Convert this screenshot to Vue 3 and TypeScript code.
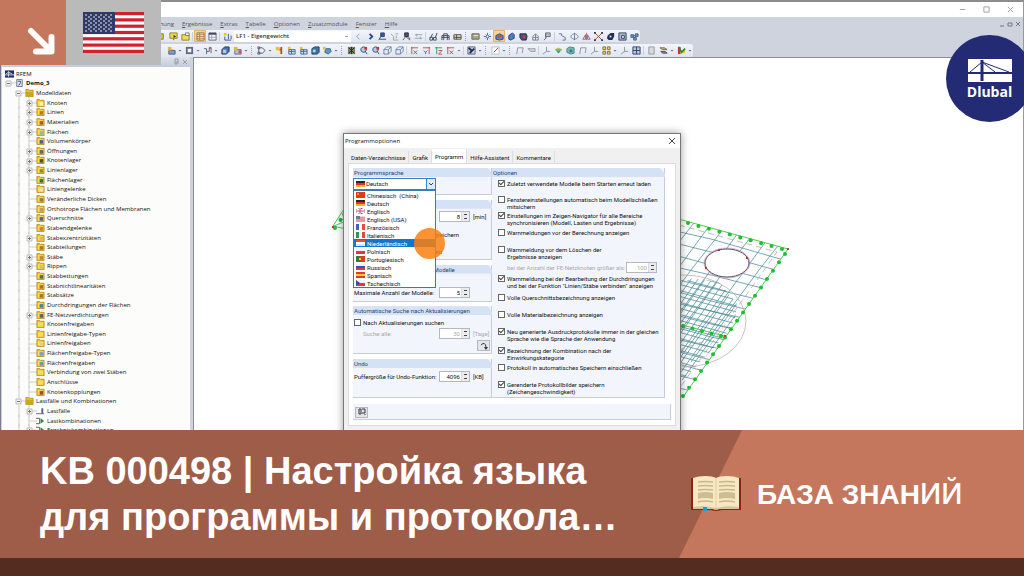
<script setup lang="ts">
import { ref } from 'vue'

interface Shape { d: string; f?: string; s?: string; w?: number }
interface TreeRow { label: string; level: number; box?: '+' | '-'; icon: string; tint?: string; bold?: boolean }
interface Option { label: string; on: boolean; gap: string; sub?: boolean }
interface Language { name: string; flag: Shape[] }

const menus = ['Berechnung', 'Ergebnisse', 'Extras', 'Tabelle', 'Optionen', 'Zusatzmodule', 'Fenster', 'Hilfe']

const glyphs: Record<string, Shape[]> = {
  bulb: [{ d: 'M1 2h6v6H1z', f: '#d8c23a', s: '#8a7a20' }],
  note: [{ d: 'M1 1h8v6H6L5 9V7H1z', f: '#f0d84a', s: '#8b7d28' }, { d: 'M5 3l3 2-3 2z', f: '#444' }],
  folder: [{ d: 'M1 3h8v6H1z', f: '#f2dc5c', s: '#8b7d28' }, { d: 'M5 1h4v3H5z', f: '#fff', s: '#777' }],
  panel: [{ d: 'M1 1h8v8H1z', f: '#fff0c8', s: '#8a6a48' }, { d: 'M4 1v8M1 3h8M1 5h8M1 7h8', s: '#b08048' }],
  table: [{ d: 'M1 1h8v8H1z', f: '#eef0f4', s: '#667' }, { d: 'M1 2h8', s: '#446', w: 2 }, { d: 'M4 3v6M1 6h8', s: '#aab' }],
  load: [{ d: 'M1 1h3v3H1z', f: '#e8c72f' }, { d: 'M2 5v4h7M6 2v6M9 4v4', s: '#35558f' }],
  prev: [{ d: 'M6 2L3 5l3 3', s: '#7d94c4' }],
  next: [{ d: 'M4 2l3 3-3 3', s: '#2448a0', w: 2 }],
  point: [{ d: 'M3 1h4v4H3zM3 5L1 9', f: '#3a5a98', s: '#27406f' }, { d: 'M2 8h7', s: '#444' }],
  dims: [{ d: 'M1 2l3 3v4h5M6 2h3M7 4v3', s: '#9aa0ab' }],
  magnet: [{ d: 'M3 1h4v4H3z', f: '#35589c', s: '#223' }, { d: 'M1 9l3-4 5 4', s: '#554' }, { d: 'M7 5l2 3', s: '#b33' }],
  measure: [{ d: 'M1 3h8M1 7h8M3 2v3M7 5v3', s: '#9a9fae' }],
  glasses: [{ d: 'M1 6h3v3H1zM5 6h3v3H5zM2 6l2-4M7 6l2-5', s: '#345' }],
  bridge: [{ d: 'M1 9V4h8v5M1 6h8M3 4v5M7 4v5M3 4V2h4v2', s: '#3c4656' }],
  rail: [{ d: 'M1 3h8v5H1zM1 6h8M4 3v5', f: '#e6d8a8', s: '#4c4c50' }],
  sheet: [{ d: 'M1 2h8v6H1z', f: '#a5a58a', s: '#66665a' }, { d: 'M3 4h5', s: '#eee' }],
  move: [{ d: 'M5 1v8M1 5h8M3 3l4 4M7 3L3 7', s: '#4a5ca4' }, { d: 'M4 4h2v2H4z', f: '#fff' }],
  cube: [{ d: 'M1 4l4-2 4 2v4l-4 1-4-1z', f: '#5e86c4', s: '#2d4672' }, { d: 'M3 6l4-2', s: '#d04a30', w: 2 }],
  cubeb: [{ d: 'M2 4l4-3 2 2v4L4 9 2 8z', f: '#4b7dc0', s: '#27406f' }, { d: 'M5 4v4', s: '#e3543a' }],
  cubec: [{ d: 'M1 2h7l1 3-1 4H3L1 6z', f: '#3b5288', s: '#2a2c46' }, { d: 'M4 4h3v3H4z', f: '#d63b30' }],
  house: [{ d: 'M2 9V5l3-3 3 3v4zM2 6h6M5 2v7', s: '#7b8089' }],
  flagp: [{ d: 'M3 1h5v4H3zM3 1v6M1 9l3-3', f: '#bcc3cf', s: '#656d7a' }],
  snake: [{ d: 'M1 2h3v2l4 2v3H5', s: '#657087' }],
  rotate: [{ d: 'M1 5c1-4 7-4 8 0-1 4-7 4-8 0M5 1v8', s: '#6c7fa0' }],
  mirror: [{ d: 'M1 8l3-5v5zM9 8L6 3v5z', s: '#7b6672' }, { d: 'M5 1v8', s: '#b66' }],
  cross: [{ d: 'M1 1l8 8M9 1L1 9', s: '#a53b3b' }, { d: 'M0 0h2v2H0zM8 0h2v2H8zM0 8h2v2H0zM8 8h2v2H8z', f: '#334' }],
  ball: [{ d: 'M2 4l3-3h4v4L7 9H3L1 7z', f: '#202c5c' }, { d: 'M4 4h2v2H4z', f: '#dfe6f4' }],
  camera: [{ d: 'M1 1h8v8H1z', f: '#a9b7d4', s: '#334362' }, { d: 'M4 4h3v3H4z', f: '#fff', s: '#334' }],
  fish: [{ d: 'M1 3h3v3H1zM6 2h3v3H6zM4 6h3v3H4zM3 4l4 0M3 5l3 2', f: '#7d96c4', s: '#46618f' }],
  frame: [{ d: 'M1 1h8v8H1z', f: '#616a80' }, { d: 'M3 3h4v4H3z', f: '#f3f5fa' }],
  shelf: [{ d: 'M1 3h3v6M4 6h3V2h2v6', s: '#4d5f80' }, { d: 'M7 1h2v2H7z', f: '#c44' }],
  solid: [{ d: 'M1 4l3-3h5v5L6 9H1z', f: '#4a6db0', s: '#26385e' }, { d: 'M2 4h4v4H2z', f: '#b4c9ea' }],
  star: [{ d: 'M2 4h7v5H2z', f: '#b8c2d6', s: '#59688a' }, { d: 'M1 1h4v4H1z', f: '#e4bd2e' }, { d: 'M6 5h3v3H6z', f: '#d65544' }],
  slab: [{ d: 'M2 5h7v4H2z', f: '#7fa0d4', s: '#3c5a90' }, { d: 'M1 1h4v4H1z', f: '#e4bd2e' }, { d: 'M5 4h2v2H5z', f: '#d65544' }],
  nodes: [{ d: 'M1 1h2v2H1zM1 7h2v2H1zM2 3v4M3 2h3M3 8h3M6 2l3 3-3 3', f: '#eee', s: '#46516a' }],
  pole: [{ d: 'M1 1h4v4H1z', f: '#e7c331' }, { d: 'M7 1v8M5 4h3', s: '#c44536', w: 2 }],
  plate: [{ d: 'M1 1h3v3H1z', f: '#e7c331' }, { d: 'M2 4h7v5H2zM5 4v5M2 6h7', f: '#d2dcec', s: '#45659a' }],
  book: [{ d: 'M1 3l3-2h5v6L7 9H1z', f: '#3f6fa2', s: '#213c60' }, { d: 'M2 4h3v3H2z', f: '#a8dfd4' }],
  globe: [{ d: 'M3 3h5l1 3-3 3-4-2z', f: '#5b9ac4', s: '#376080' }, { d: 'M0 1h3v3H0z', f: '#e7c331' }],
  zoom: [{ d: 'M5 1a3 3 0 1 0 .1 0M7 6l2 3', f: '#b6cbe8', s: '#27406f' }, { d: 'M6 1h3v3H6z', f: '#c33' }],
  hatch: [{ d: 'M1 1h8v8H1z', f: '#7d7e60' }, { d: 'M2 2l6 6M8 2L2 8M5 1v8', s: '#222a2f' }],
  wire: [{ d: 'M1 4l3-3h5v5L6 9H1zM1 4h5v5M6 4l3-3', s: '#6480a8' }],
  axx: [{ d: 'M1 2h8M2 1v8', s: '#d0453a' }, { d: 'M4 5l4 4M8 5L4 9', s: '#3a7f50' }],
  axy: [{ d: 'M1 2h8M8 1v8', s: '#d0453a' }, { d: 'M2 5l2 2 2-2M4 7v2', s: '#2b5d9d' }],
  axz: [{ d: 'M1 2h8M3 1v8', s: '#2f9c4b' }, { d: 'M5 5h4L5 9h4', s: '#c4453a' }],
  pen: [{ d: 'M1 1h8v8H1z', f: '#c9d2de', s: '#555e70' }, { d: 'M2 2l3 3M3 8l5-5', s: '#182a4c', w: 2 }],
  line: [{ d: 'M1 1h8v8H1z', f: '#fff', s: '#b5bbc7' }, { d: 'M3 7l5-5', s: '#b33b33' }],
  gate: [{ d: 'M2 9l1-7h6L8 8', s: '#8d929b' }],
  strip: [{ d: 'M1 3h8v3H4z', f: '#d6d8dd', s: '#92969e' }],
  axis: [{ d: 'M5 1v5h4M5 6L1 9', s: '#8390a5' }],
  rainbow: [{ d: 'M1 4l4-2 4 2-4 4z', f: '#4db97c' }, { d: 'M1 4l4-2 4 2z', f: '#e8b53f' }, { d: 'M3 6h4L5 8z', f: '#3d78c9' }],
  mesh: [{ d: 'M1 3l3-2 5 1v6L5 9 1 7z', f: '#71bdb0', s: '#428777' }, { d: 'M4 4h3v3H4z', f: '#3f6dba' }],
  four: [{ d: 'M1 1h3v3H1zM6 1h3v3H6zM1 6h3v3H1zM6 6h3v3H6z', f: '#e8d268', s: '#7a6f3b' }],
  windows: [{ d: 'M1 1h8v8H1zM5 1v8M1 5h8', f: '#b7c3df', s: '#303f6c' }],
  page: [{ d: 'M2 1h6v8H2z', f: '#d6d9de', s: '#9499a2' }],
  layers: [{ d: 'M1 2h5l3 2H4z', f: '#e6c43c', s: '#666' }, { d: 'M2 6h5l2 2H4z', f: '#8a93a8', s: '#445' }],
  vee: [{ d: 'M1 1h3v8H1z', f: '#c33' }, { d: 'M3 8l6-6v6z', f: '#f0ca2c' }, { d: 'M2 1l3 6 4-4', s: '#2f8a3d', w: 2 }],
}

// "|" is a thin divider, ":" a toolbar grip, "v" a drop-down arrow, "*" marks a pressed button
const barOneStart = ['bulb', 'note', 'folder', '|', '*panel', 'table', '|', 'load']
const barOneEnd = ['prev', 'next', 'point', 'dims', 'magnet', 'measure', '|', 'glasses', 'bridge', 'rail', ':', 'sheet', 'move', '*cube', 'cubeb', 'cubec', 'house', 'flagp', '|', 'snake', 'rotate', 'mirror', 'cross', 'ball', 'camera', 'fish']
const barTwo = ['slab', 'v', 'frame', 'v', 'shelf', 'v', 'solid', 'star', 'v', ':', 'nodes', 'v', 'pole', 'plate', 'plate', 'book', 'globe', 'v', ':', 'hatch', 'zoom', 'zoom', 'wire', 'wire', '|', 'axx', 'axy', 'axz', 'axx', 'v', '|', 'pen', 'v', ':', 'line', 'v', ':', 'gate', 'strip', '|', 'axis', 'rainbow', 'mesh', 'gate', 'axis', 'four', 'v', 'axis', 'windows', '|', 'page', 'layers', 'v', 'vee', 'v']

const child = (label: string, tint = '', box?: '+'): TreeRow => ({ label, level: 2, icon: 'folder', tint, box })
const tree: TreeRow[] = [
  { label: 'RFEM', level: 0, icon: 'app' },
  { label: 'Demo_3', level: 0, icon: 'doc', box: '-', bold: true },
  { label: 'Modelldaten', level: 1, icon: 'folder', box: '-' },
  child('Knoten', '#fff3a0', '+'), child('Linien', '#c07820', '+'), child('Materialien', '#b0563a', '+'),
  child('Flächen', '#8cbcb0', '+'), child('Volumenkörper', '#3d6b86'), child('Öffnungen', '#5d6b74', '+'),
  child('Knotenlager', '#4a5a28', '+'), child('Linienlager', '#98922e', '+'), child('Flächenlager', '#2c7a4a'),
  child('Liniengelenke', '#e8e0b0'), child('Veränderliche Dicken', '#9b7a4e'), child('Orthotrope Flächen und Membranen', '#c59a52'),
  child('Querschnitte', '#4767a8', '+'), child('Stabendgelenke', '#c2862c'), child('Stabexzentrizitäten', '#d8b86a', '+'),
  child('Stabteilungen', '#b0742c'), child('Stäbe', '#c08830', '+'), child('Rippen', '#d6bd74', '+'),
  child('Stabbettungen', '#55704a'), child('Stabnichtlinearitäten', '#a87430'), child('Stabsätze', '#a8702c'),
  child('Durchdringungen der Flächen', '#3f8a8c'), child('FE-Netzverdichtungen', '#4a6a72', '+'), child('Knotenfreigaben'),
  child('Linienfreigabe-Typen'), child('Linienfreigaben', '#e6cf8a'), child('Flächenfreigabe-Typen', '#6fa3cf'),
  child('Flächenfreigaben', '#5f97cb'), child('Verbindung von zwei Stäben'), child('Anschlüsse'), child('Knotenkopplungen', '#a8482e'),
  { label: 'Lastfälle und Kombinationen', level: 1, icon: 'folder', box: '-' },
  { label: 'Lastfälle', level: 2, icon: 'case', box: '+' },
  { label: 'Lastkombinationen', level: 2, icon: 'combo' },
  { label: 'Ergebniskombinationen', level: 2, icon: 'combo', box: '+' },
]

const bands = (a: string, b: string, c: string): Shape[] => [{ d: 'M0 0h9v2H0z', f: a }, { d: 'M0 2h9v2H0z', f: b }, { d: 'M0 4h9v2H0z', f: c }]
const poles = (a: string, b: string, c: string): Shape[] => [{ d: 'M0 0h3v6H0z', f: a }, { d: 'M3 0h3v6H3z', f: b }, { d: 'M6 0h3v6H6z', f: c }]
const german = bands('#2b2320', '#d8352a', '#f0b030')
const languages: Language[] = [
  { name: 'Chinesisch  (China)', flag: [{ d: 'M0 0h9v6H0z', f: '#e23a22' }, { d: 'M1 1h2v2H1z', f: '#f6a030' }] },
  { name: 'Deutsch', flag: german },
  { name: 'Englisch', flag: [{ d: 'M0 0h9v6H0z', f: '#56629c' }, { d: 'M0 0l9 6M9 0L0 6M4 0v6M0 3h9', s: '#fff', w: 2 }, { d: 'M4 0v6M0 3h9', s: '#d44452' }] },
  { name: 'Englisch (USA)', flag: [{ d: 'M0 0h9v6H0z', f: '#f3d8d8' }, { d: 'M0 2h9M0 4h9M0 6h9', s: '#cf6068' }, { d: 'M0 0h4v3H0z', f: '#6a75ae' }] },
  { name: 'Französisch', flag: poles('#4a5fc0', '#fff', '#ee4a42') },
  { name: 'Italienisch', flag: poles('#2b9a50', '#fff', '#e2473e') },
  { name: 'Niederländisch', flag: bands('#e0503f', '#fff', '#dfe8f8') },
  { name: 'Polnisch', flag: [{ d: 'M0 0h9v3H0z', f: '#f4f4f4' }, { d: 'M0 3h9v3H0z', f: '#e03a34' }] },
  { name: 'Portugiesisch', flag: [{ d: 'M0 0h9v6H0z', f: '#dc3a2a' }, { d: 'M0 0h4v6H0z', f: '#3d7a38' }, { d: 'M3 2h2v2H3z', f: '#f0cf3a' }] },
  { name: 'Russisch', flag: bands('#f2f2f6', '#2f50c8', '#e03a34') },
  { name: 'Spanisch', flag: bands('#e03a2a', '#f7d23a', '#e03a2a') },
  { name: 'Tschechisch', flag: [{ d: 'M0 0h9v3H0z', f: '#f4f4f4' }, { d: 'M0 3h9v3H0z', f: '#dc3a34' }, { d: 'M0 0l4 3-4 3z', f: '#34509c' }] },
]
const language = ref('Deutsch')
const hovered = 'Niederländisch'

const tabs = ['Daten-Verzeichnisse', 'Grafik', 'Programm', 'Hilfe-Assistent', 'Kommentare']

const options = ref<Option[]>([
  { label: 'Zuletzt verwendete Modelle beim Starten erneut laden', on: true, gap: 'tight' },
  { label: 'Fenstereinstellungen automatisch beim Modellschließen\nmitsichern', on: false, gap: 'tight' },
  { label: 'Einstellungen im Zeigen-Navigator für alle Bereiche\nsynchronisieren (Modell, Lasten und Ergebnisse)', on: true, gap: '' },
  { label: 'Warnmeldungen vor der Berechnung anzeigen', on: false, gap: '' },
  { label: 'Warnmeldung vor dem Löschen der\nErgebnisse anzeigen', on: false, gap: 'tight', sub: true },
  { label: 'Warnmeldung bei der Bearbeitung der Durchdringungen\nund bei der Funktion "Linien/Stäbe verbinden" anzeigen', on: true, gap: 'loose' },
  { label: 'Volle Querschnittsbezeichnung anzeigen', on: false, gap: '' },
  { label: 'Volle Materialbezeichnung anzeigen', on: false, gap: '' },
  { label: 'Neu generierte Ausdruckprotokolle immer in der gleichen\nSprache wie die Sprache der Anwendung', on: true, gap: 'loose' },
  { label: 'Bezeichnung der Kombination nach der\nEinwirkungskategorie', on: true, gap: '' },
  { label: 'Protokoll in automatisches Speichern einschließen', on: false, gap: '' },
  { label: 'Gerenderte Protokollbilder speichern\n(Zeichengeschwindigkeit)', on: true, gap: '' },
])

// Points spread evenly between two ends, used for the support symbols
const between = (x1: number, y1: number, x2: number, y2: number, n: number) =>
  Array.from({ length: n }, (_, i) => ({ x: x1 + ((x2 - x1) * i) / (n - 1), y: y1 + ((y2 - y1) * i) / (n - 1) }))
const supports = [
  ...between(687, 223, 781, 249, 10),
  ...between(784, 254, 682, 396, 18),
  ...between(682, 326, 720, 336, 5),
  ...between(334, 228, 345, 212, 3),
]
const coarse = [
  ...Array.from({ length: 14 }, (_, i) => `M670 ${230 + i * 12}l40 ${9 + (i % 3)}l90 ${26 - i}`),
  ...Array.from({ length: 8 }, (_, i) => `M${700 + i * 17} 214l-44 ${56 + (i % 2) * 4}l-68 92`),
].join('')
const fine = [
  ...Array.from({ length: 20 }, (_, i) => `M670 ${264 + i * 6}l80 22`),
  ...Array.from({ length: 13 }, (_, i) => `M${686 + i * 7} 275l-84 118`),
].join('')
const stars = Array.from({ length: 9 }, (_, r) => Array.from({ length: r % 2 ? 5 : 6 }, (_, c) => ({ x: 3 + c * 5 + (r % 2 ? 3 : 0), y: 3 + r * 2 }))).flat()
</script>

<template>
  <main class="page">
    <section class="app">
      <header class="titlebar">
        <button class="winbtn" aria-label="Minimieren"><svg viewBox="0 0 8 8"><path d="M1 4h6" /></svg></button>
        <button class="winbtn" aria-label="Maximieren"><svg viewBox="0 0 8 8"><path d="M1 1h6v6H1z" /></svg></button>
        <button class="winbtn" aria-label="Schließen"><svg viewBox="0 0 8 8"><path d="M1 1l6 6M7 1L1 7" /></svg></button>
      </header>

      <nav class="menubar">
        <button v-for="m in menus" :key="m" class="menu"><u>{{ m[0] }}</u>{{ m.slice(1) }}</button>
        <svg class="mdi" viewBox="0 0 24 8"><path d="M1 6h4M9 3h4v3H9zM17 2l4 4M21 2l-4 4" /></svg>
      </nav>

      <div class="bar first">
        <template v-for="(t, i) in barOneStart" :key="i">
          <i v-if="t === '|'" class="sep"></i>
          <button v-else class="tool" :class="{ pressed: t[0] === '*' }" :aria-label="t">
            <svg viewBox="0 0 10 10"><path v-for="(p, k) in glyphs[t.replace('*', '')]" :key="k" :d="p.d" :fill="p.f ?? 'none'" :stroke="p.s ?? 'none'" :stroke-width="p.w ?? 1" /></svg>
          </button>
        </template>
        <select class="case" aria-label="Lastfall"><option>LF1 - Eigengewicht</option></select>
        <template v-for="(t, i) in barOneEnd" :key="i">
          <i v-if="t === '|'" class="sep"></i>
          <i v-else-if="t === ':'" class="grip"></i>
          <button v-else class="tool" :class="{ pressed: t[0] === '*' }" :aria-label="t">
            <svg viewBox="0 0 10 10"><path v-for="(p, k) in glyphs[t.replace('*', '')]" :key="k" :d="p.d" :fill="p.f ?? 'none'" :stroke="p.s ?? 'none'" :stroke-width="p.w ?? 1" /></svg>
          </button>
        </template>
      </div>

      <div class="bar second">
        <template v-for="(t, i) in barTwo" :key="i">
          <i v-if="t === '|'" class="sep"></i>
          <i v-else-if="t === ':'" class="grip"></i>
          <i v-else-if="t === 'v'" class="drop"></i>
          <button v-else class="tool" :aria-label="t">
            <svg viewBox="0 0 10 10"><path v-for="(p, k) in glyphs[t]" :key="k" :d="p.d" :fill="p.f ?? 'none'" :stroke="p.s ?? 'none'" :stroke-width="p.w ?? 1" /></svg>
          </button>
        </template>
      </div>

      <div class="work">
        <aside class="side">
          <div class="sidehead">
            <svg viewBox="0 0 16 8"><path d="M2 1h3v3H2zM1 5h5M3 5v2M10 2l4 4M14 2l-4 4" /></svg>
          </div>
          <ul class="tree">
            <li v-for="(r, i) in tree" :key="i" :class="['row', 'level' + r.level, { root: r.icon === 'app', bold: r.bold }]">
              <span v-if="r.icon !== 'app'" class="knot">
                <svg viewBox="0 0 10 10">
                  <path class="guide" :d="r.level === 2 ? 'M2 -1v12M2 5h8' : 'M5 5h5'" />
                  <path v-if="r.level === 2" class="guide" d="M-8 -1v12" />
                  <template v-if="r.box">
                    <path class="box" d="M0 3h5v5H0z" /><path class="sign" :d="r.box === '+' ? 'M1 5.500h3M2.500 4v3' : 'M1 5.500h3'" />
                  </template>
                </svg>
              </span>
              <svg class="ico" viewBox="0 0 10 8">
                <template v-if="r.icon === 'folder'">
                  <path d="M1 0h3l1 1h4v7H1z" fill="#e9bf2c" stroke="#a8811c" stroke-width=".8" />
                  <path v-if="r.level === 1" d="M1 3h8v5H1z" fill="#c9a522" />
                  <path v-else d="M2 2h6v5H2z" fill="#fbdc55" />
                  <path v-if="r.tint" d="M4 3h4v4H4z" :fill="r.tint" />
                </template>
                <template v-else-if="r.icon === 'app'">
                  <path d="M0 0h10v8H0z" fill="#262f66" /><path d="M0 5h10M4 1v6M1 4l3-2 4 2" stroke="#dfe4f4" fill="none" />
                </template>
                <template v-else-if="r.icon === 'doc'">
                  <path d="M2 0h6v8H2z" fill="#e6ecf6" stroke="#5d6d8c" /><path d="M3 2h3v2L4 7" stroke="#284a8a" fill="none" />
                </template>
                <template v-else-if="r.icon === 'case'">
                  <path d="M0 7h9" stroke="#667" fill="none" /><path d="M6 1h2v6H6z" fill="#4b5a9a" />
                </template>
                <template v-else>
                  <path d="M0 1h4M0 7h4M4 1v6" stroke="#555" fill="none" /><path d="M5 1l4 3-4 3z" fill="#2d8a48" />
                </template>
              </svg>
              <span class="name">{{ r.label }}</span>
            </li>
          </ul>
        </aside>

        <div class="canvas">
          <svg class="model" viewBox="193 58 830 372" preserveAspectRatio="xMinYMin slice">
            <defs>
              <clipPath id="plate"><path clip-rule="evenodd" d="M670 217L787 249 682 397 670 410zM704 263a22 14 0 0 0 44 0a22 14 0 0 0-44 0" /></clipPath>
              <clipPath id="dense"><path d="M670 288l22-10 26 4 18 22-2 16-10 16-42 44h-12z" /></clipPath>
            </defs>
            <g clip-path="url(#plate)">
              <path class="net" :d="coarse" />
              <g clip-path="url(#dense)"><path class="net" :d="fine" /></g>
              <path class="dash" d="M678 225l98 27-96 134M678 350l40-14" />
            </g>
            <ellipse class="ring" cx="683" cy="321" rx="62" ry="46" />
            <ellipse class="holeglow" cx="726" cy="263" rx="23" ry="15" />
            <ellipse class="hole" cx="726" cy="263" rx="22" ry="14" />
            <path class="edge" d="M670 217l117 32-105 148M681 325l43 11M350 198l-18 28 22 5" />
            <path class="net" d="M333 226l12-5M338 218l8 3M341 213l5 13" />
            <circle v-for="(s, i) in supports" :key="i" class="support" :cx="s.x" :cy="s.y" r="2" />
            <path class="mark" d="M786 248h2v2h-2zM723 335h2v2h-2zM745 257h2v2h-2zM717 249h2v2h-2zM704 267h2v2h-2zM331 226h2v2h-2z" />
          </svg>

          <section class="dialog" role="dialog" aria-label="Programmoptionen">
            <header class="dlghead">
              <span>Programmoptionen</span>
              <button class="close" aria-label="Schließen"><svg viewBox="0 0 8 8"><path d="M1 1l6 6M7 1L1 7" /></svg></button>
            </header>
            <div class="tabs">
              <button v-for="t in tabs" :key="t" class="tab" :class="{ active: t === 'Programm' }">{{ t }}</button>
            </div>
            <div class="sheet">
              <div class="cols">
                <div class="left">
                  <fieldset class="group lang">
                    <legend>Programmsprache</legend>
                    <div class="combo">
                      <svg class="flag" viewBox="0 0 9 6"><path v-for="(p, k) in german" :key="k" :d="p.d" :fill="p.f" /></svg>
                      <select v-model="language" aria-label="Programmsprache">
                        <option v-for="l in languages" :key="l.name">{{ l.name }}</option>
                      </select>
                      <span class="arrow"><svg viewBox="0 0 8 8"><path d="M2 3l2 2 2-2" /></svg></span>
                      <ul class="list">
                        <li v-for="l in languages" :key="l.name" :class="{ hot: l.name === hovered }">
                          <svg class="flag" viewBox="0 0 9 6"><path v-for="(p, k) in l.flag" :key="k" :d="p.d" :fill="p.f ?? 'none'" :stroke="p.s ?? 'none'" :stroke-width="p.w ?? 1" /></svg>
                          <span>{{ l.name }}</span>
                        </li>
                      </ul>
                    </div>
                  </fieldset>
                  <fieldset class="group save">
                    <legend>Automatisches Speichern</legend>
                    <div class="field">
                      <label for="every">Speichern alle:</label>
                      <span class="spin"><input id="every" value="8"><b></b></span><span class="unit">[min]</span>
                    </div>
                    <p class="rest">Vor Berechnung automatisch speichern</p>
                    <p class="rest">Sicherungskopie erstellen</p>
                  </fieldset>
                  <fieldset class="group recent">
                    <legend>Liste der zuletzt verwendeten Modelle</legend>
                    <div class="field">
                      <label for="count">Maximale Anzahl der Modelle:</label>
                      <span class="spin"><input id="count" value="5"><b></b></span><span class="unit"></span>
                    </div>
                  </fieldset>
                  <fieldset class="group update">
                    <legend>Automatische Suche nach Aktualisierungen</legend>
                    <label class="check"><input type="checkbox"><span>Nach Aktualisierungen suchen</span></label>
                    <div class="field off">
                      <label for="days">Suche alle:</label>
                      <span class="spin"><input id="days" value="30" disabled><b></b></span><span class="unit">[Tage]</span>
                    </div>
                    <button class="now" aria-label="Jetzt suchen"><svg viewBox="0 0 10 8"><path d="M2 3q4-4 5 2" /><path class="tip" d="M5 5h4L7 8z" /></svg></button>
                  </fieldset>
                  <fieldset class="group undo">
                    <legend>Undo</legend>
                    <div class="field">
                      <label for="buffer">Puffergröße für Undo-Funktion:</label>
                      <span class="spin"><input id="buffer" value="4096"><b></b></span><span class="unit">[KB]</span>
                    </div>
                  </fieldset>
                </div>
                <fieldset class="group opts">
                  <legend>Optionen</legend>
                  <div v-for="(o, i) in options" :key="i" class="opt" :class="o.gap">
                    <label class="check"><input v-model="o.on" type="checkbox"><span>{{ o.label }}</span></label>
                    <div v-if="o.sub" class="field off">
                      <label for="mesh">bei der Anzahl der FE-Netzknoten größer als:</label>
                      <span class="spin"><input id="mesh" value="100" disabled><b></b></span>
                    </div>
                  </div>
                </fieldset>
              </div>
              <footer class="foot">
                <button class="now" aria-label="Hilfe"><svg viewBox="0 0 10 8"><path d="M2 1h2v5H2zM5 1h3v4H5M8 6v1" /></svg></button>
              </footer>
            </div>
            <span class="halo"></span>
          </section>
        </div>
      </div>
    </section>

    <section class="banner">
      <h1>KB 000498 | Настройка языка<br>для программы и протокола…</h1>
      <div class="kb">
        <svg class="openbook" viewBox="0 0 50 36">
          <path d="M0 2h50v32H30q-5 2-10 0H0z" fill="#8f2119" />
          <path d="M2 2Q7 0 14 0Q22 0 25 2Q28 0 36 0Q43 0 48 2v31H28q-3 1-6 0H2z" fill="#f7e8c4" />
          <path d="M2 31Q14 29 25 32Q36 29 48 31v2H28q-3 1-6 0H2z" fill="#d6c49a" />
          <path d="M25 2v30" stroke="#e0cfa4" stroke-width="1" />
          <path d="M7 6q7-1 15 0M7 10q7-1 15 0M7 14q7-1 15 0M7 26q7-2 15 0M28 6q8-1 16 0M28 10q8-1 16 0M28 14q8-1 16 0M28 26q8-2 16 0" stroke="#c9b88d" stroke-width="1.500" fill="none" />
          <path d="M7 17q7-2 15 0v6q-8-2-15 0zM28 17q8-2 16 0v6q-8-2-16 0z" fill="#cdbd92" />
          <path d="M12 31h4v4h-4z" fill="#1b9bd8" />
        </svg>
        <h2>БАЗА ЗНАН<span>ИЙ</span></h2>
      </div>
    </section>
    <div class="strip"></div>

    <div class="badge">
      <div class="corner"><svg viewBox="0 0 65 65"><path d="M31 31l20 20M36 51.500h15.500V37" /></svg></div>
      <div class="nation">
        <svg viewBox="0 0 61 41">
          <rect width="61" height="41" fill="#fff" />
          <rect v-for="n in 7" :key="n" width="61" height="3.200" :y="(n - 1) * 6.300" fill="#d2202f" />
          <rect width="32" height="22" fill="#2f3a68" />
          <circle v-for="(s, i) in stars" :key="i" :cx="s.x" :cy="s.y" r=".8" fill="#fff" />
        </svg>
      </div>
    </div>

    <div class="brand">
      <svg viewBox="0 0 44 23">
        <path d="M0 0h44v23H0z" fill="#fff" />
        <path d="M0 14h44" stroke="#232b74" stroke-width="2" />
        <path d="M14 1v21" stroke="#232b74" stroke-width="3" />
        <path d="M2 13L14 3M14 3l13 10M14 3l27 10" stroke="#232b74" stroke-width="1" fill="none" />
      </svg>
      <strong>Dlubal</strong>
    </div>
  </main>
</template>

<style>
html, body, #app { height: 100%; margin: 0; }
</style>

<style scoped>
* { box-sizing: border-box; }
button, input, select { font: inherit; color: inherit; padding: 0; border: 0; background: none; border-radius: 0; }
svg { display: block; }
ul, h1, h2, p { margin: 0; padding: 0; list-style: none; }

.page { position: relative; display: flex; flex-direction: column; height: 100%; min-height: 0; overflow: hidden; font-family: "Open Sans", "Noto Sans", sans-serif; color: #333; }
.app { flex: 1; min-height: 0; display: flex; flex-direction: column; overflow: hidden; border-top: 2px solid #8c8c8c; border-right: 1px solid #999; background: #cfd3de; }

.titlebar { display: flex; justify-content: flex-end; align-items: center; height: 15px; padding-right: 1px; background: #fff; flex: none; }
.winbtn { width: 24px; height: 13px; display: grid; place-items: center; }
.winbtn svg { width: 7px; height: 7px; fill: none; stroke: #999; }

.menubar { display: flex; align-items: center; gap: 8px; height: 13px; flex: none; padding-left: 140px; font-size: 6px; color: #555; }
.menu { flex: none; }
.mdi { width: 24px; height: 8px; margin-left: auto; fill: none; stroke: #778; stroke-width: 1; }

.bar { display: flex; align-items: center; height: 12px; flex: none; width: max-content; border-radius: 0 3px 3px 0; background: linear-gradient(#f2f5fa, #e0e5ef); }
.first { padding-left: 155px; margin-bottom: 2px; }
.second { padding-left: 165px; height: 13px; }
.tool { flex: none; width: 12px; height: 12px; display: grid; place-items: center; border-radius: 1px; }
.tool svg { width: 9px; height: 9px; }
.pressed { background: #fcd391; box-shadow: inset 0 0 0 1px #e3b36a; }
.sep { flex: none; width: 1px; height: 9px; margin: 0 1px; background: #c9cfdb; }
.grip { flex: none; width: 2px; height: 9px; margin: 0 2px; border-left: 1px dotted #9aa3b5; }
.drop { flex: none; width: 4px; height: 2px; margin: 0 1px; background: #667; clip-path: polygon(0 0, 100% 0, 50% 100%); }
.case { appearance: none; width: 117px; height: 11px; margin: 0 1px; padding-left: 2px; background: linear-gradient(#99a, #99a) no-repeat right 3px center / 3px 1px #fff; font-size: 6px; font-weight: 600; line-height: 11px; }

.work { flex: 1; min-height: 0; display: flex; }
.side { flex: none; width: 193px; display: flex; flex-direction: column; padding: 0 3px 0 1px; background: #ccd3df; border-left: 1px solid #7f7b90; min-height: 0; margin-bottom: -5px; }
.sidehead { height: 10px; flex: none; display: flex; justify-content: flex-end; align-items: center; background: linear-gradient(#dce1ea, #c3ccda); }
.sidehead svg { width: 16px; height: 8px; margin-right: 1px; fill: none; stroke: #99a; }
.tree { flex: 1; min-height: 0; display: grid; grid-auto-rows: minmax(0, 1fr); padding-top: 2px; background: #fcfcfb; font-size: 6px; color: #111; }
.row { display: flex; align-items: center; min-height: 0; line-height: 8px; white-space: nowrap; }
.level0 { padding-left: 4px; }
.level1 { padding-left: 14px; }
.level2 { padding-left: 25px; }
.root { padding-left: 2px; }
.bold { font-weight: 700; }
.knot { flex: none; width: 8px; height: 10px; }
.knot svg { width: 10px; height: 10px; overflow: visible; fill: none; }
.guide { stroke: #ccc; stroke-width: 1; }
.box { fill: #f4f4f4; stroke: #bbb; stroke-width: 1; }
.sign { stroke: #777; stroke-width: 1; }
.ico { flex: none; width: 9px; height: 8px; margin: 0 2px 0 1px; }

.canvas { flex: 1; min-width: 0; position: relative; overflow: hidden; background: #fff; border-top: 1px solid #8b8d94; border-left: 1px solid #8b8d94; }
.model { width: 100%; height: 100%; }
.net { fill: none; stroke: #3c8590; stroke-width: .7; }
.dash { fill: none; stroke: #b5a8ae; stroke-width: .8; stroke-dasharray: 6 4; }
.ring { fill: none; stroke: #c0aeb4; stroke-width: .8; }
.holeglow { fill: none; stroke: #d49ad8; stroke-width: .8; }
.hole { fill: #fff; stroke: #555; }
.edge { fill: none; stroke: #4bd04b; stroke-width: 1; }
.support { fill: #1fbe35; }
.mark { fill: #c8382c; }

.dialog { position: absolute; left: 149px; top: 75px; width: 338px; height: 320px; display: flex; flex-direction: column; background: #f0f0f0; border: 1px solid #777; box-shadow: 0 0 8px rgba(0, 0, 0, .4); font-family: Roboto, "Liberation Sans", sans-serif; font-size: 6px; line-height: 7px; color: #111; }
.dlghead { display: flex; justify-content: space-between; align-items: center; height: 14px; flex: none; padding: 0 3px 0 1px; background: #fff; font-family: "Open Sans", sans-serif; }
.close { width: 10px; height: 10px; display: grid; place-items: center; }
.close svg { width: 8px; height: 8px; fill: none; stroke: #444; }
.tabs { display: flex; align-items: flex-end; height: 15px; flex: none; padding-left: 4px; }
.tab { height: 12px; padding: 0 3px; border-right: 1px solid #ddd; white-space: nowrap; }
.active { height: 14px; background: #fff; }
.sheet { flex: none; margin: 0 4px; padding: 4px 4px 5px 4px; background: #fff; border: 1px solid #dcdcdc; }
.cols { display: grid; grid-template-columns: 139px 1fr; padding-right: 6px; }
.left { display: flex; flex-direction: column; justify-content: space-between; }
.group { position: relative; min-width: 0; margin: 0; padding: 0; border: 0; box-shadow: inset -1px -1px #c6ccd9; background: #f2f5fb; }
.group legend { display: block; float: left; width: 100%; height: 9px; padding: 0 1px; line-height: 9px; color: #26477e; background: #d5e1f4; clip-path: polygon(0 0, 97% 0, 100% 60%, 100% 100%, 0 100%); white-space: nowrap; }
.group legend + * { clear: both; }
.lang { height: 27px; }
.save { height: 60px; }
.save legend, .undo legend { margin-bottom: 2px; }
.recent { height: 37px; }
.recent legend { margin-bottom: 13px; }
.update { height: 48px; }
.undo { height: 39px; }

.combo { position: relative; display: flex; align-items: center; width: 83px; height: 12px; top: 1px; border: 1px solid #3f7fc0; background: #fff; padding-left: 2px; z-index: 2; }
.combo select { appearance: none; flex: 1; min-width: 0; height: 10px; line-height: 10px; margin-left: 1px; }
.flag { flex: none; width: 9px; height: 6px; }
.arrow { width: 9px; height: 10px; display: grid; place-items: center; background: #dcecfa; border-left: 1px solid #3f7fc0; }
.arrow svg { width: 8px; height: 8px; fill: none; stroke: #345; }
.list { position: absolute; left: -1px; top: 11px; width: 83px; background: #fff; border: 1px solid #3a78b8; }
.list li { display: flex; align-items: center; gap: 2px; height: 8px; padding-left: 2px; white-space: pre; }
.hot { background: #1275d0; color: #fff; }

.field { display: flex; align-items: center; height: 12px; margin-top: 1px; padding-left: 1px; }
.field label { flex: 1; white-space: nowrap; }
.spin { display: flex; width: 31px; height: 11px; border: 1px solid #b5b8be; background: #fff; }
.spin input { flex: 1; min-width: 0; text-align: right; padding-right: 1px; background: #fff; }
.spin b { width: 8px; background: linear-gradient(#444, #444) center 2px / 3px 1px no-repeat, linear-gradient(#444, #444) center 6px / 3px 1px no-repeat, #ebebeb; border-left: 1px solid #ddd; }
.unit { width: 22px; padding-left: 3px; }
.off { color: #aaa; padding-left: 10px; }
.save .rest { margin: 8px 33px 0 0; text-align: right; white-space: nowrap; }
.save .rest + .rest { margin-right: 50px; margin-top: 10px; }
.check { display: flex; align-items: flex-start; gap: 2px; white-space: pre; }
.check input { appearance: none; flex: none; width: 7px; height: 7px; margin: 0; border: 1px solid #666; background: #fff; }
.check input:checked::after { content: ""; display: block; width: 4px; height: 2px; border: solid #444; border-width: 0 0 1px 1px; transform: rotate(-45deg); }
.update .check { padding: 4px 0 0 1px; }
.now { display: grid; place-items: center; width: 13px; height: 11px; background: #e3e5e9; border: 1px solid #b5b8be; }
.now svg { width: 10px; height: 8px; fill: none; stroke: #334; }
.now .tip { fill: #334; stroke: none; }
.update .now { margin: 1px 2px 0 auto; }
.opts legend { margin-bottom: 3px; }
.opt { min-height: 17px; padding-left: 6px; }
.tight { min-height: 16px; }
.loose { min-height: 19px; }
.opt .field { height: 12px; margin: 1px 0 2px; padding: 0 8px 0 9px; }
.foot { display: flex; align-items: center; height: 16px; margin-top: 6px; padding-left: 2px; background: #f2f5fb; box-shadow: inset 0 -1px #c6ccd9, inset -1px 0 #c6ccd9; }
.halo { position: absolute; z-index: 5; left: 70px; top: 94px; width: 31px; height: 31px; border-radius: 50%; background: rgba(250, 128, 16, .85); }

.banner { position: relative; z-index: 3; flex: none; display: flex; justify-content: space-between; align-items: stretch; height: 128px; background: #9e5d48; color: #fff; font-family: "Liberation Sans", Arial, sans-serif; }
h1 { align-self: center; padding-left: 40px; font-size: 38px; line-height: 46px; font-weight: 700; white-space: nowrap; }
.kb { position: relative; flex: none; width: 345px; display: flex; align-items: center; gap: 16px; padding-left: 12px; }
.kb::before { content: ""; position: absolute; inset: 0; background: #c5775d; clip-path: polygon(63px 0, 100% 0, 100% 100%, 0 100%); }
.openbook { position: relative; width: 50px; height: 36px; }
h2 { position: relative; font-size: 28px; line-height: 36px; font-weight: 700; white-space: nowrap; }
h2 span { font-family: Inter, sans-serif; font-weight: 500; }
.strip { flex: none; height: 18px; background: #542c20; }

.badge { position: absolute; z-index: 4; left: 0; top: 0; display: flex; height: 65px; }
.corner { width: 66px; background: #c5775d; }
.corner svg { width: 65px; height: 65px; fill: none; stroke: #fff; stroke-width: 6; stroke-linecap: round; stroke-linejoin: round; }
.nation { width: 95px; display: grid; place-items: center; background: #bababa; }
.nation svg { width: 61px; height: 41px; }
.brand { position: absolute; z-index: 4; right: -9px; top: 35px; width: 87px; height: 87px; display: flex; flex-direction: column; align-items: center; padding-top: 24px; border-radius: 50%; background: #232b74; color: #fff; }
.brand svg { width: 44px; height: 23px; }
.brand strong { font-size: 14px; line-height: 20px; font-weight: 700; }
</style>
